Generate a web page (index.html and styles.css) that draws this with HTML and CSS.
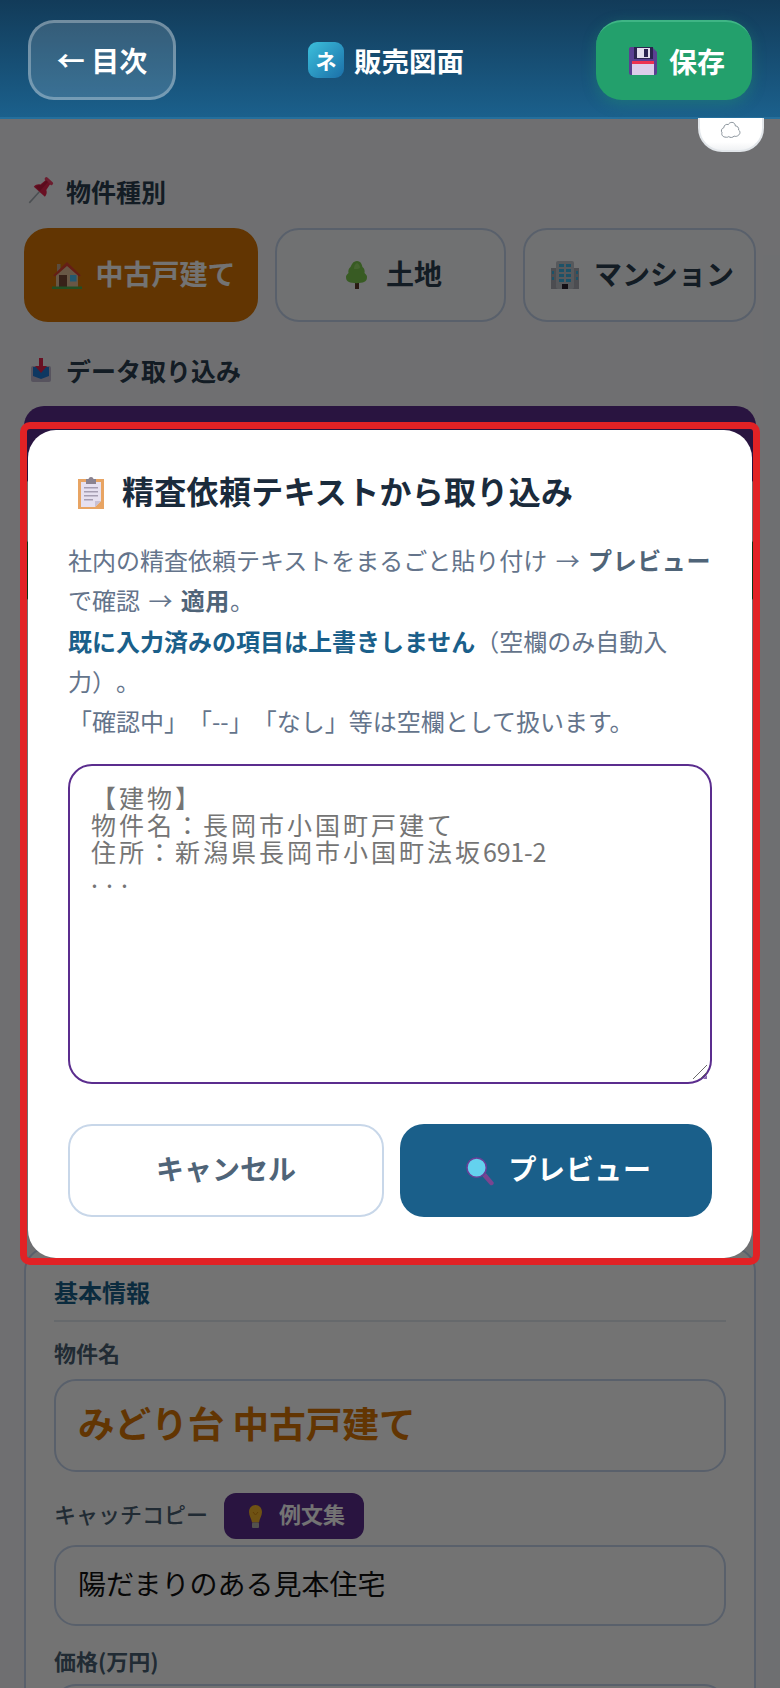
FILE: index.html
```html
<!DOCTYPE html>
<html lang="ja">
<head>
<meta charset="utf-8">
<title>販売図面</title>
<link rel="stylesheet" href="styles.css">
</head>
<body>
<header class="topbar">
  <button class="btn-back">← 目次</button>
  <div class="app-title"><span class="app-logo">ネ</span><span>販売図面</span></div>
  <button class="btn-save">
    <svg class="ico28" viewBox="0 0 28 28"><path d="M2 0h21l5 5v21a2 2 0 0 1-2 2H2a2 2 0 0 1-2-2V2a2 2 0 0 1 2-2z" fill="#5a3f92"/><rect x="5" y="0" width="19" height="12" fill="#2b2350"/><rect x="8" y="1" width="13" height="10" fill="#e4deee"/><rect x="15" y="2" width="4" height="8" fill="#2b2350"/><rect x="3" y="14" width="22" height="14" fill="#dccdea"/><rect x="3" y="14" width="22" height="3" fill="#ee3150"/></svg>
    <span>保存</span>
  </button>
</header>
<div class="sync-chip">
  <svg viewBox="0 0 24 20" class="sync-ico"><path d="M6.500 18C3 18 1 15.500 2 13c-1.500-2-.5-5 2-5.500C4 4.500 7 3 9 4c1-2.500 5-3.500 7-1 .5.800.8 1.500.8 2.500 2.500 0 4.200 2 3.700 4.500 2 1.500 2 4.500-.5 6-1 1-3 1.500-4.500 .8-1.500 1.700-4.500 2-6 .5-1 .8-2.200.9-3 .7z" fill="#fff" stroke="#7d8790" stroke-width="1"/></svg>
</div>

<main class="page">
  <h2 class="sec-label">
    <svg class="ico-pin" viewBox="0 0 24 24"><g transform="rotate(42 12 12)"><rect x="11.200" y="13" width="1.600" height="15" fill="#a8b0b8"/><rect x="7" y="-3" width="10" height="3.500" rx="1.500" fill="#f04068"/><path d="M9 0h6l1 7c2 1 3.500 3 3.500 6h-15C4.500 10 6 8 8 7z" fill="#e8254f"/><path d="M9.500 0H12v12H6c.2-2 1-4 3-5z" fill="#c81c42"/></g></svg>
    物件種別
  </h2>
  <div class="type-row">
    <button class="type-btn type-on">
      <svg class="ico-house" viewBox="0 0 30 28"><rect x="5" y="3" width="3.500" height="9" fill="#c8a88c"/><path d="M4 13L15 4l11 9v13H4z" fill="#e6c29a"/><path d="M1 14.500L15 1l14 13.500-2 1L15 5 3 15.500z" fill="#e0442f"/><rect x="7" y="14" width="8" height="12" fill="#7a4a35"/><rect x="18" y="14" width="6.500" height="6.500" fill="#4fc3f7"/><rect x="0" y="25.500" width="30" height="2.500" fill="#4caf50"/></svg>
      <span>中古戸建て</span>
    </button>
    <button class="type-btn type-land">
      <svg class="ico-tree" viewBox="0 0 24 28"><rect x="10" y="21" width="4" height="7" fill="#5d3a2b"/><path d="M12 0c4 0 5 4 5.500 6 2 1.500 2.500 4 2 6 2 2 2.500 2.500 2.500 4 0 3-1 4-3 5-2.500 1.500-12.500 1.500-15 0-2-1-3-2-3-5 0-1.500.5-2 2.500-4-.5-2 0-4.500 2-6C6.500 4 8 0 12 0z" fill="#7ccb4f"/><path d="M12 2c-2 1-3 3-3 6 2 0 5 0 6-1 0-2-1-4-3-5z" fill="#9ade6a"/></svg>
      <span>土地</span>
    </button>
    <button class="type-btn">
      <svg class="ico28" viewBox="0 0 28 28"><rect x="0" y="7" width="28" height="21" fill="#a8acb4"/><rect x="5" y="0" width="18" height="28" rx="2" fill="#c2c5cc"/><g fill="#3fb6e6"><rect x="8" y="3" width="5" height="3"/><rect x="15" y="3" width="5" height="3"/><rect x="8" y="8" width="5" height="3"/><rect x="15" y="8" width="5" height="3"/><rect x="8" y="13" width="5" height="3"/><rect x="15" y="13" width="5" height="3"/><rect x="8" y="18" width="5" height="3"/><rect x="15" y="18" width="5" height="3"/><rect x="1" y="10" width="2" height="3"/><rect x="25" y="10" width="2" height="3"/><rect x="1" y="16" width="2" height="3"/><rect x="25" y="16" width="2" height="3"/></g><rect x="11" y="23" width="6" height="5" fill="#2a2230"/></svg>
      <span>マンション</span>
    </button>
  </div>

  <h2 class="sec-label sec-label-2">
    <svg class="ico-tray" viewBox="0 0 20 24"><rect x="0" y="8" width="20" height="16" rx="2" fill="#c0b8d0"/><path d="M2 9h16v9l-8 3-8-3z" fill="#1f7ad8"/><rect x="8" y="0" width="4" height="10" fill="#e8254f"/><path d="M4 8h12l-6 7z" fill="#e8254f"/></svg>
    データ取り込み
  </h2>
  <div class="import-purple"></div>
  <div class="import-green"></div>

  <section class="card">
    <h3 class="card-title">基本情報</h3>
    <label class="field-label">物件名</label>
    <div class="input input-name">みどり台 中古戸建て</div>
    <div class="label-row">
      <label class="field-label-light">キャッチコピー</label>
      <button class="chip-ideas">
        <svg class="ico-bulb" viewBox="0 0 17 23"><path d="M8.500 0c3.800 0 6.500 3 6.500 7 0 4-2.500 6.500-3 10.500H5C4.500 13.500 2 11 2 7c0-4 2.700-7 6.500-7z" fill="#f5b52a"/><path d="M6 7l2.500 3L11 7" fill="none" stroke="#d88a10" stroke-width="1"/><rect x="5" y="17.500" width="7" height="5.500" rx="1" fill="#b8b4ae"/></svg>
        <span class="chip-text">例文集</span>
      </button>
    </div>
    <div class="input input-copy">陽だまりのある見本住宅</div>
    <label class="field-label field-label-price">価格(万円)</label>
    <div class="input input-price"></div>
  </section>
</main>

<div class="overlay">
  <div class="modal">
    <span class="annot"></span>
    <h2 class="modal-title">
      <svg class="ico-clip" viewBox="0 0 26 32"><rect x="0" y="2" width="26" height="30" fill="#e8a463"/><path d="M3 5h20v19l-6 6H3z" fill="#e6e0f0"/><path d="M17 30l6-6h-6z" fill="#c8c0d4"/><rect x="8" y="2" width="10" height="5" fill="#8a8290"/><circle cx="13" cy="2.500" r="2.500" fill="#8a8290"/><g fill="#a59db2"><rect x="6" y="10" width="14" height="1.500"/><rect x="6" y="14" width="14" height="1.500"/><rect x="6" y="18" width="14" height="1.500"/><rect x="6" y="22" width="9" height="1.500"/></g></svg>
      <span class="modal-title-text">精査依頼テキストから取り込み</span>
    </h2>
    <p class="modal-desc">社内の精査依頼テキストをまるごと貼り付け → <strong>プレビュー</strong> で確認 → <strong>適用</strong>。<br><strong class="hl">既に入力済みの項目は上書きしません</strong>（空欄のみ自動入力）。<br>「確認中」「--」「なし」等は空欄として扱います。</p>
    <div class="paste-box" role="textbox"><div>【建物】</div><div>物件名：長岡市小国町戸建て</div><div>住所：新潟県長岡市小国町法坂<span class="half">691-2</span></div><div class="dots">...</div>
      <svg class="grip" viewBox="0 0 16 16"><path d="M1 15L15 1M8 15l7-7" stroke="#6b6b6b" stroke-width="1" fill="none"/><path d="M11 15l4-4v4z" fill="#8a6cb0"/></svg>
    </div>
    <div class="modal-actions">
      <button class="btn-cancel">キャンセル</button>
      <button class="btn-preview">
        <svg class="ico-glass" viewBox="0 0 30 30"><path d="M17 20l3.500-3.500 8 9.500c1 2-2 4-3.500 3z" fill="#7a4590"/><circle cx="11" cy="11" r="10" fill="#64d2ee" stroke="#6a3f98" stroke-width="1.600"/></svg>
        <span>プレビュー</span>
      </button>
    </div>
  </div>
</div>
</body>
</html>
```
FILE: styles.css
```css
* { box-sizing: border-box; }
html, body { margin: 0; padding: 0; }
body {
  width: 780px;
  height: 1688px;
  overflow: hidden;
  position: relative;
  background: #f5f7fa;
  font-family: "Noto Sans CJK JP", "Noto Sans", sans-serif;
  color: #2c3e50;
  text-spacing-trim: space-all;
}
button { font-family: inherit; cursor: pointer; }
h2, h3, p { margin: 0; }

.topbar {
  position: relative;
  z-index: 30;
  height: 119px;
  padding: 20px 28px 0;
  display: flex;
  justify-content: space-between;
  align-items: flex-start;
  background: linear-gradient(180deg, #123b59 0%, #1b608c 100%);
  border-bottom: 2px solid #256f9c;
}
.btn-back {
  width: 148px;
  height: 80px;
  border-radius: 26px;
  border: 3px solid rgba(255,255,255,.3);
  background: rgba(255,255,255,.14);
  color: #fff;
  font-size: 28px;
  font-weight: 700;
}
.btn-save {
  width: 156px;
  height: 80px;
  border: 0;
  border-top: 2px solid #3fb585;
  border-radius: 26px;
  background: #23a06c;
  box-shadow: 0 4px 14px rgba(35,160,108,.35);
  color: #fff;
  font-size: 28px;
  font-weight: 700;
  display: flex;
  align-items: center;
  justify-content: center;
  gap: 12px;
  padding: 0 0 0 6px;
}
.ico28 { width: 28px; height: 28px; flex: none; }
.app-title {
  height: 36px;
  margin-top: 22px;
  display: flex;
  align-items: center;
  gap: 10px;
  color: #fff;
  font-size: 27.500px;
  font-weight: 700;
}
.app-logo {
  width: 36px;
  height: 36px;
  border-radius: 9px;
  background: linear-gradient(135deg, #3cc0dc 0%, #1b6fa8 100%);
  display: flex;
  align-items: center;
  justify-content: center;
  font-size: 21px;
  line-height: 1;
}

.sync-chip {
  position: absolute;
  z-index: 30;
  top: 118px;
  left: 698px;
  width: 66px;
  height: 34px;
  padding-bottom: 8px;
  border-radius: 0 0 24px 24px;
  background: linear-gradient(180deg, #fff 75%, #f0f2f4 100%);
  border: 2px solid #e2e6ea;
  border-top: 0;
  display: flex;
  align-items: center;
  justify-content: center;
}
.sync-ico { width: 22px; height: 18px; }

.page { padding: 0 24px; }
.sec-label {
  margin: 0;
  padding: 52px 0 0 4px;
  height: 92px;
  display: flex;
  align-items: center;
  gap: 14px;
  font-size: 25px;
  font-weight: 700;
  line-height: 34px;
  color: #2c3e50;
}
.sec-label-2 { padding-top: 11px; height: 84px; gap: 15px; }
.ico-pin { width: 24px; height: 24px; overflow: visible; }
.ico-tray { width: 20px; height: 24px; margin-left: 3px; }
.type-row {
  margin-top: 17px;
  display: grid;
  grid-template-columns: 234fr 231fr 233fr;
  gap: 17px;
}
.type-btn {
  height: 94px;
  border: 2px solid #c5d5ee;
  border-radius: 24px;
  background: #f8fafc;
  color: #2c3e50;
  font-size: 28px;
  font-weight: 700;
  display: flex;
  align-items: center;
  justify-content: center;
  gap: 15px;
  padding: 0 0 4px 6px;
}
.type-on { background: #d97706; border-color: #d97706; color: #fff; gap: 13px; }
.type-land { gap: 17px; }
.ico-house { width: 30px; height: 28px; flex: none; margin-top: 4px; }
.ico-tree { width: 24px; height: 28px; flex: none; margin-top: 4px; }
.type-btn .ico28 { margin-top: 4px; }

.import-purple {
  height: 84px;
  border-radius: 20px;
  background: #5b2d8e;
}
.import-green {
  margin-top: 43px;
  height: 75px;
  border-radius: 20px;
  background: #15803d;
}
.card {
  margin-top: 639px;
  padding: 26px 28px 0;
  border: 2px solid #c5d5ee;
  border-radius: 24px 24px 0 0;
  background: #fff;
  height: 600px;
}
.card-title {
  margin: 0;
  padding-bottom: 10px;
  height: 47px;
  border-bottom: 2px solid #e2e8f0;
  color: #1a5f8a;
  font-size: 24px;
  line-height: 34px;
  font-weight: 700;
}
.field-label, .field-label-light {
  display: block;
  font-size: 22px;
  line-height: 30px;
  font-weight: 700;
  color: #4a5f73;
}
.field-label { margin-top: 15px; }
.field-label-light { font-weight: 500; padding-bottom: 6px; line-height: 36px; }
.field-label-price { margin-top: 19px; }
.input {
  border: 2px solid #c5d5ee;
  border-radius: 22px;
  background: #fff;
  display: flex;
  align-items: center;
  padding: 0 22px 6px;
}
.input-name {
  margin-top: 12px;
  height: 93px;
  color: #d97706;
  font-size: 36.600px;
  font-weight: 700;
}
.input-copy {
  margin-top: 6px;
  height: 81px;
  color: #111;
  font-size: 28px;
}
.input-price { margin-top: 9px; height: 80px; }
.label-row {
  margin-top: 21px;
  display: flex;
  align-items: center;
  gap: 16px;
}
.chip-ideas {
  width: 140px;
  height: 46px;
  border: 0;
  border-radius: 12px;
  background: #5b2d8e;
  color: #fff;
  font-size: 22px;
  font-weight: 700;
  display: flex;
  align-items: center;
  gap: 15px;
  padding: 0 0 0 23px;
}
.chip-text { padding-bottom: 6px; }
.ico-bulb { width: 17px; height: 23px; }

.overlay {
  position: absolute;
  z-index: 20;
  inset: 0;
  background: rgba(0,0,0,.55);
  display: flex;
  align-items: center;
  justify-content: center;
}
.modal {
  position: relative;
  width: 724px;
  height: 828px;
  padding: 40px;
  border-radius: 28px;
  background: #fff;
}
.annot {
  position: absolute;
  inset: -8px -8px -7px;
  border: 7px solid #e22225;
  border-radius: 10px;
  pointer-events: none;
}
.modal-title {
  display: flex;
  align-items: center;
  gap: 18px;
  padding-left: 10px;
  height: 46px;
  font-size: 32px;
  letter-spacing: .3px;
  font-weight: 700;
  color: #1a2b3c;
}
.modal-title-text { padding-bottom: 6px; }
.ico-clip { width: 26px; height: 32px; flex: none; }
.modal-desc {
  margin-top: 24px;
  font-size: 24px;
  line-height: 40.300px;
  word-spacing: 3px;
  color: #64748b;
}
.modal-desc strong { font-weight: 700; color: #4f6478; letter-spacing: .6px; }
.modal-desc strong.hl { color: #1a5f8a; letter-spacing: 0; }
.paste-box {
  position: relative;
  margin-top: 23px;
  height: 320px;
  border: 2px solid #5b2d8e;
  border-radius: 24px;
  padding: 18px 21px;
  background: #fff;
  color: #757575;
  font-size: 25px;
  line-height: 26.600px;
  letter-spacing: 3px;
}
.half { letter-spacing: -.2px; }
.dots { letter-spacing: 8px; }
.grip {
  position: absolute;
  right: 2px;
  bottom: 2px;
  width: 16px;
  height: 16px;
}
.modal-actions {
  margin-top: 40px;
  display: grid;
  grid-template-columns: 316px 312px;
  gap: 16px;
}
.btn-cancel, .btn-preview {
  height: 93px;
  border-radius: 24px;
  font-size: 28px;
  font-weight: 700;
  padding-bottom: 6px;
}
.btn-cancel {
  border: 2px solid #c8d7e9;
  background: #fff;
  color: #4f6478;
}
.btn-preview {
  border: 0;
  background: #1a5f8a;
  color: #fff;
  display: flex;
  align-items: center;
  justify-content: center;
  gap: 13px;
  padding-left: 6px;
  padding-right: 0;
  letter-spacing: .6px;
}
.ico-glass { width: 29px; height: 29px; margin-top: 6px; }
```
